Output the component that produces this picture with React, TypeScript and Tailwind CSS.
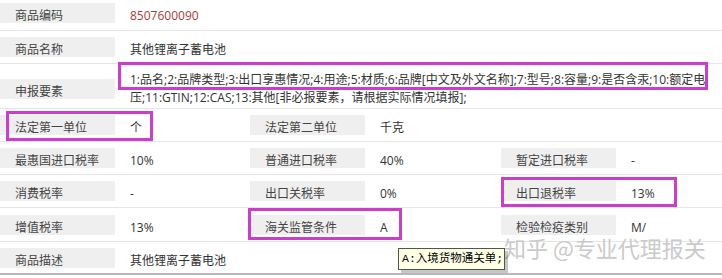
const font = 'font-["Open_Sans","Noto_Sans_CJK_SC",sans-serif]';

function Label({ children }: { children: React.ReactNode }) {
  return (
    <div className="w-[115px] h-[20px] shrink-0 bg-[#efefef] pl-[15px] pt-[5px] leading-[15px] text-[12px] text-[#444] whitespace-nowrap">
      {children}
    </div>
  );
}

function Value({ children, className = '' }: { children: React.ReactNode; className?: string }) {
  return (
    <div className={`h-[20px] pl-[15px] pt-[5px] leading-[15px] text-[12px] text-[#333] whitespace-nowrap ${className}`}>
      {children}
    </div>
  );
}

function Row({ h, children, last }: { h: string; children: React.ReactNode; last?: boolean }) {
  return (
    <div className={`flex items-center ${h} ${last ? 'border-b-2 border-[#b8b8b8]' : 'border-b border-[#e6e6e6]'}`}>
      {children}
    </div>
  );
}

export default function App() {
  return (
    <div className={`relative w-[722px] h-[278px] bg-white overflow-hidden ${font}`}>
      {/* 基本信息 */}
      <div className="flex items-start pt-[3px] h-[31px] border-b border-[#e6e6e6]">
        <Label>商品编码</Label>
        <Value className="text-[#a83c3c]!">8507600090</Value>
      </div>
      <Row h="h-[33px]">
        <Label>商品名称</Label>
        <Value>其他锂离子蓄电池</Value>
      </Row>
      <div className="flex items-start h-[45px] border-b border-[#e6e6e6]">
        <div className="mt-[15px]">
          <Label>申报要素</Label>
        </div>
        <div className="pl-[15px] pt-[7px] leading-[18px] text-[12px] text-[#333] whitespace-nowrap">
          1:品名;2:品牌类型;3:出口享惠情况;4:用途;5:材质;6:品牌[中文及外文名称];7:型号;8:容量;9:是否含汞;10:额定电
          <br />
          压;11:GTIN;12:CAS;13:其他[非必报要素，请根据实际情况填报];
        </div>
      </div>

      {/* 税率 */}
      <Row h="h-[33px]">
        <Label>法定第一单位</Label>
        <Value className="w-[135px]">个</Value>
        <Label>法定第二单位</Label>
        <Value className="w-[136px]">千克</Value>
      </Row>
      <Row h="h-[33px]">
        <Label>最惠国进口税率</Label>
        <Value className="w-[135px]">10%</Value>
        <Label>普通进口税率</Label>
        <Value className="w-[136px]">40%</Value>
        <Label>暂定进口税率</Label>
        <Value>-</Value>
      </Row>
      <Row h="h-[33px]">
        <Label>消费税率</Label>
        <Value className="w-[135px]">-</Value>
        <Label>出口关税率</Label>
        <Value className="w-[136px]">0%</Value>
        <Label>出口退税率</Label>
        <Value>13%</Value>
      </Row>
      <Row h="h-[34px]">
        <Label>增值税率</Label>
        <Value className="w-[135px]">13%</Value>
        <Label>海关监管条件</Label>
        <Value className="w-[136px]">A</Value>
        <Label>检验检疫类别</Label>
        <Value>M/</Value>
      </Row>
      <Row h="h-[33px]" last>
        <Label>商品描述</Label>
        <Value>其他锂离子蓄电池</Value>
      </Row>

      {/* 标注框 */}
      <div className="absolute left-[118px] top-[62px] w-[590px] h-[28px] border-[3px] border-[#cc3dcc]" />
      <div className="absolute left-[6px] top-[111px] w-[147px] h-[30px] border-[3px] border-[#cc3dcc]" />
      <div className="absolute left-[501px] top-[177px] w-[176px] h-[30px] border-[3px] border-[#cc3dcc]" />
      <div className="absolute left-[248px] top-[208px] w-[154px] h-[32px] border-[3px] border-[#cc3dcc]" />

      {/* 水印 */}
      <div className="absolute left-[504px] top-[236px] text-[22px] leading-[22px] text-[#cacaca] whitespace-nowrap font-['Noto_Sans_CJK_SC',sans-serif]">
        知乎 @专业代理报关
      </div>

      {/* 提示 */}
      <div className="absolute left-[398px] top-[248px] w-[107px] h-[22px] bg-[#ffffe6] border border-[#4a5a4a] shadow-[3px_3px_0_rgba(0,0,0,0.22)] pl-[3px] leading-[20px] text-[11.5px] text-black whitespace-nowrap font-['Liberation_Mono','Noto_Sans_CJK_SC',monospace]">
        A:入境货物通关单;
      </div>
    </div>
  );
}
